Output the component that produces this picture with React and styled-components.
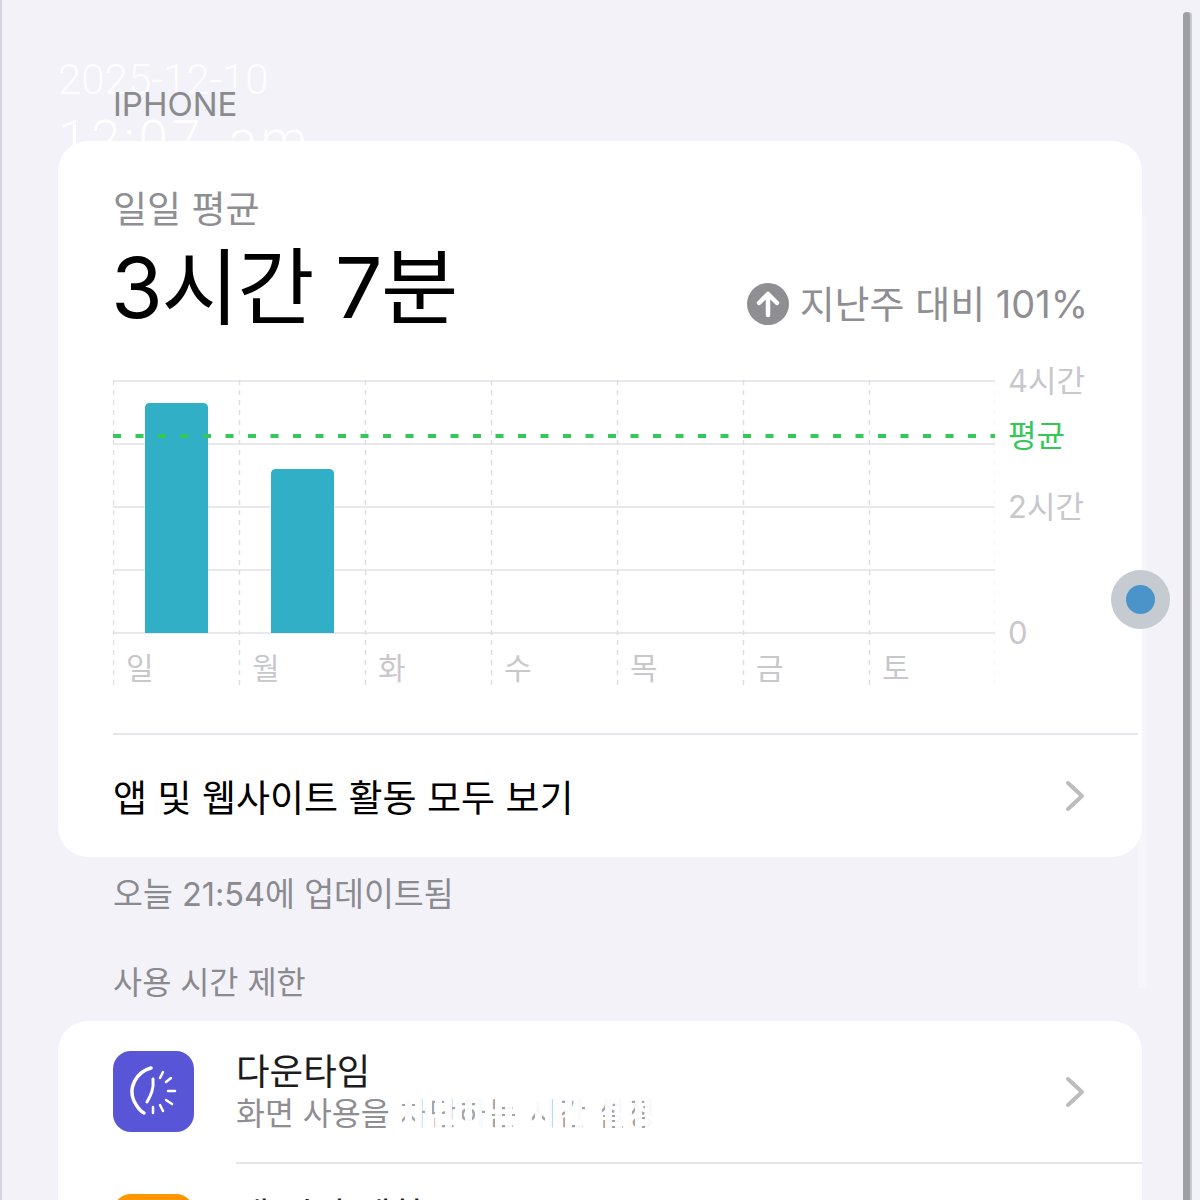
import React from 'react';
import styled, { createGlobalStyle } from 'styled-components';

const FONT = `"Inter", "Noto Sans CJK KR", "Noto Sans", sans-serif`;

const GlobalStyle = createGlobalStyle`
	html, body {
		margin: 0;
		padding: 0;
		background: #f2f2f8;
	}
	body {
		font-family: ${FONT};
	}
`;

const Page = styled.div`
	position: relative;
	width: 1200px;
	height: 1200px;
	overflow: hidden;
	box-sizing: border-box;
	padding: 84px 58px 0 56px;
	background: #f2f2f8;
	border-left: 2px solid #d6d6e0;
`;

const Watermark = styled.div`
	position: absolute;
	top: 55px;
	left: 56px;
	color: rgba(255, 255, 255, 0.92);
	font-family: "Roboto", sans-serif;
	font-weight: 300;
	white-space: nowrap;
`;

const WatermarkLine = styled.div`
	font-size: ${(p) => p.$size}px;
	line-height: 50px;
	letter-spacing: ${(p) => p.$spacing || 0}px;
	word-spacing: ${(p) => p.$words || 0}px;
	margin-bottom: 10px;
`;

const Scrollbar = styled.div`
	position: absolute;
	top: 12px;
	bottom: -10px;
	left: 1181px;
	width: 7px;
	border-radius: 4px 4px 0 0;
	background: #9e9ea5;
	box-shadow: 2px 0 0 #c8c8d0;
`;

const EdgeStrip = styled.div`
	position: absolute;
	top: 215px;
	left: 1136px;
	width: 9px;
	height: 773px;
	background: #f6f6fa;
`;

const TouchDot = styled.div`
	position: absolute;
	top: 570px;
	left: 1109px;
	width: 59px;
	height: 59px;
	border-radius: 50%;
	background: #c6cad1;
	display: flex;
	align-items: center;
	justify-content: center;

	&::after {
		content: '';
		width: 29px;
		height: 29px;
		border-radius: 50%;
		background: #4a94c9;
	}
`;

const Caption = styled.div`
	position: relative;
	padding-left: 55px;
	color: #8a8a8f;
	font-size: ${(p) => p.$size || 31}px;
	line-height: 40px;
	margin-bottom: ${(p) => p.$after || 0}px;
	white-space: nowrap;
`;

const Card = styled.section`
	position: relative;
	background: #fff;
	border-radius: 30px;
	padding-left: 55px;
	overflow: hidden;
	margin-bottom: ${(p) => p.$after || 0}px;
`;

const Header = styled.div`
	display: flex;
	align-items: flex-end;
	justify-content: space-between;
	padding: 49px 54px 0 0;
`;

const AverageLabel = styled.div`
	color: #8e8e93;
	font-size: 37px;
	line-height: 40px;
`;

const AverageValue = styled.div`
	color: #000;
	font-size: 84px;
	line-height: 92px;
	letter-spacing: -1.5px;
	margin: 12px 0 0 -2px;
	white-space: nowrap;
`;

const Trend = styled.div`
	display: flex;
	align-items: center;
	gap: 11px;
	color: #8e8e93;
	font-size: 38px;
	line-height: 44px;
	margin-bottom: 8px;
	white-space: nowrap;
`;

const ChartArea = styled.div`
	display: grid;
	grid-template-columns: 882px 90px;
	margin-top: 46px;
	height: 309px;
`;

const Plot = styled.div`
	position: relative;
	height: 309px;

	svg {
		display: block;
	}
`;

const DayRow = styled.div`
	position: absolute;
	left: 0;
	right: 0;
	top: 268px;
	display: grid;
	grid-template-columns: repeat(7, 126px);
`;

const Day = styled.span`
	padding-left: 13px;
	color: #c7c7cc;
	font-size: 30px;
	line-height: 40px;
`;

const Axis = styled.div`
	position: relative;
`;

const AxisLabel = styled.span`
	position: absolute;
	left: 13px;
	top: ${(p) => p.$y - 19}px;
	color: ${(p) => p.$color || '#c7c7cc'};
	font-size: 31px;
	line-height: 40px;
	white-space: nowrap;
`;

const Divider = styled.div`
	height: 2px;
	background: #e6e6ea;
	margin: ${(p) => p.$before || 0}px ${(p) => p.$end || 0}px 0 ${(p) => p.$inset || 0}px;
`;

const LinkRow = styled.div`
	display: flex;
	align-items: center;
	justify-content: space-between;
	height: 122px;
	padding-right: 57px;
	color: #000;
	font-size: 37px;
	white-space: nowrap;
`;

const ListRow = styled.div`
	display: flex;
	align-items: center;
	gap: 42px;
	height: 141px;
	padding-right: 57px;
	box-sizing: border-box;
`;

const AppIcon = styled.div`
	flex: none;
	width: 81px;
	height: 81px;
	border-radius: 18px;
	background: ${(p) => p.$color};
	display: flex;
	align-items: center;
	justify-content: center;
`;

const RowText = styled.div`
	flex: 1;
	min-width: 0;
`;

const RowTitle = styled.div`
	color: #1c1c1e;
	font-size: 36.5px;
	line-height: 44px;
`;

const RowSub = styled.div`
	color: #8e8e93;
	font-size: 31.5px;
	line-height: 40px;
	white-space: nowrap;
`;

const Broken = styled.span`
	position: relative;
	letter-spacing: 0.8px;

	&::after {
		content: '';
		position: absolute;
		inset: 0 -4px;
		background: repeating-linear-gradient(90deg, rgba(255, 255, 255, 0.95) 0 7px, rgba(255, 255, 255, 0.2) 7px 10px);
	}
`;

const NextRow = styled(ListRow)`
	align-items: flex-start;
	padding-top: 30px;
`;

const hours = [4, 3, 2, 1, 0];
const days = ['일', '월', '화', '수', '목', '금', '토'];
const bars = [
	{ x: 32, top: 23 },
	{ x: 158, top: 89 },
];

const Chevron = () => (
	<svg width="20" height="30" viewBox="0 0 20 30" fill="none">
		<path d="M3 2 L17 15 L3 28" stroke="#bcbcc1" strokeWidth="4" strokeLinecap="round" strokeLinejoin="round" />
	</svg>
);

const UpBadge = () => (
	<svg width="42" height="42" viewBox="0 0 42 42">
		<circle cx="21" cy="21" r="21" fill="#8e8e93" />
		<path d="M21 32 V12 M12 20 L21 11 L30 20" fill="none" stroke="#fff" strokeWidth="4.5" strokeLinecap="round" strokeLinejoin="round" />
	</svg>
);

const DowntimeGlyph = () => (
	<svg width="81" height="81" viewBox="0 0 81 81" fill="none" stroke="#fff" strokeLinecap="round">
		<path d="M38 17 C23 21 15 37 21 50 C24 56 27 60 31 62" strokeWidth="3.5" />
		<path d="M40 28 C41 38 38 44 34 51" strokeWidth="3" />
		<path d="M50 21 L47 27 M58 27 L53 31 M62 40 L55 40 M59 53 L53 49 M50 60 L47 54 M40 62 L40 56" strokeWidth="2.5" />
	</svg>
);

const ChartLines = () => (
	<svg width="882" height="309" viewBox="0 0 882 309" fill="none">
		{hours.map((h, i) => (
			<line key={h} x1="0" x2="882" y1={1 + i * 63} y2={1 + i * 63} stroke="#e9e9ed" strokeWidth="2" />
		))}
		{[0, 1, 2, 3, 4, 5, 6, 7].map((i) => (
			<line key={i} x1={0.5 + i * 126} x2={0.5 + i * 126} y1="0" y2="308" stroke="#dedee2" strokeWidth="1.5" strokeDasharray="5 5" />
		))}
		{bars.map((b) => (
			<path
				key={b.x}
				d={`M${b.x} 253 V${b.top + 5} Q${b.x} ${b.top} ${b.x + 5} ${b.top} H${b.x + 58} Q${b.x + 63} ${b.top} ${b.x + 63} ${b.top + 5} V253 Z`}
				fill="#30afc7"
			/>
		))}
		<line x1="0" x2="882" y1="56" y2="56" stroke="#34c759" strokeWidth="4" strokeDasharray="8 14.5" />
	</svg>
);

export default function App() {
	return (
		<Page>
			<GlobalStyle />
			<Watermark>
				<WatermarkLine $size={42}>2025-12-10</WatermarkLine>
				<WatermarkLine $size={53} $spacing={3.5} $words={8}>
					12:07 am
				</WatermarkLine>
			</Watermark>
			<EdgeStrip />
			<Caption $size={33} $after={17}>
				IPHONE
			</Caption>
			<Card $after={18}>
				<Header>
					<div>
						<AverageLabel>일일 평균</AverageLabel>
						<AverageValue>3시간 7분</AverageValue>
					</div>
					<Trend>
						<UpBadge />
						지난주 대비 101%
					</Trend>
				</Header>
				<ChartArea>
					<Plot>
						<ChartLines />
						<DayRow>
							{days.map((d) => (
								<Day key={d}>{d}</Day>
							))}
						</DayRow>
					</Plot>
					<Axis>
						<AxisLabel $y={0}>4시간</AxisLabel>
						<AxisLabel $y={55} $color="#34c759">
							평균
						</AxisLabel>
						<AxisLabel $y={126}>2시간</AxisLabel>
						<AxisLabel $y={252}>0</AxisLabel>
					</Axis>
				</ChartArea>
				<Divider $before={44} $end={4} />
				<LinkRow>
					앱 및 웹사이트 활동 모두 보기
					<Chevron />
				</LinkRow>
			</Card>
			<Caption $size={32.5} $after={48}>
				오늘 21:54에 업데이트됨
			</Caption>
			<Caption $size={31.7} $after={18}>
				사용 시간 제한
			</Caption>
			<Card>
				<ListRow>
					<AppIcon $color="#5856d6">
						<DowntimeGlyph />
					</AppIcon>
					<RowText>
						<RowTitle>다운타임</RowTitle>
						<RowSub>
							화면 사용을 <Broken>차단하는 시간 설정</Broken>
						</RowSub>
					</RowText>
					<Chevron />
				</ListRow>
				<Divider $inset={123} />
				<NextRow>
					<AppIcon $color="#ff9500" />
					<RowText>
						<RowTitle>앱 시간 제한</RowTitle>
					</RowText>
				</NextRow>
			</Card>
			<TouchDot />
			<Scrollbar />
		</Page>
	);
}
